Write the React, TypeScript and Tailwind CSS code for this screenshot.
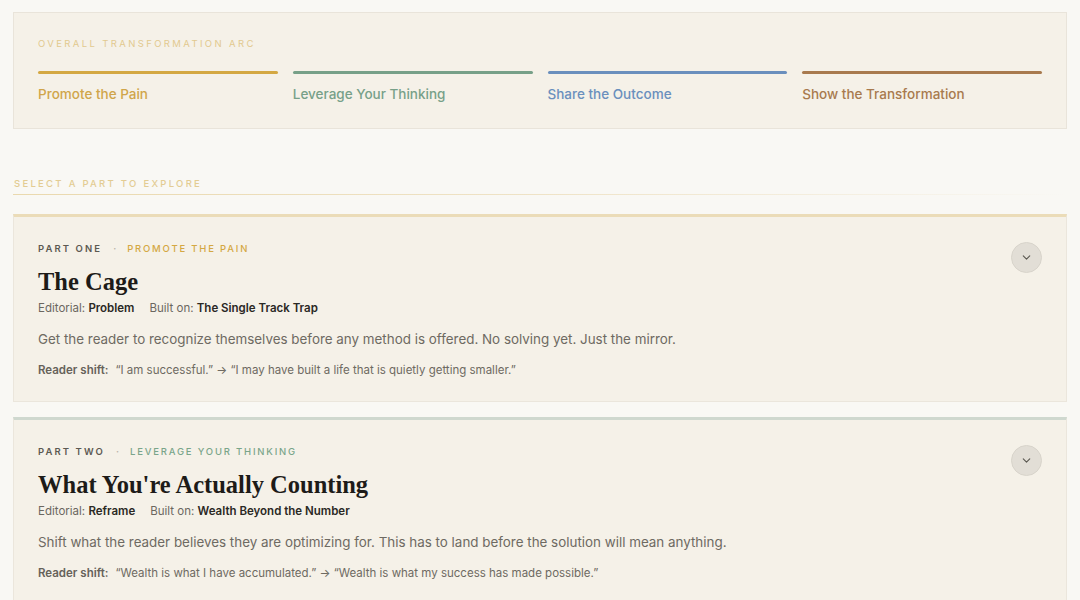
import React from "react";

const sans = { fontFamily: "Inter, 'Noto Sans', sans-serif" };

const arc = [
  { label: "Promote the Pain", line: "bg-[#d4a843]", text: "text-[#d0a54a]" },
  { label: "Leverage Your Thinking", line: "bg-[#77a088]", text: "text-[#77a088]" },
  { label: "Share the Outcome", line: "bg-[#6a8fbd]", text: "text-[#6a8fbd]" },
  { label: "Show the Transformation", line: "bg-[#a87a4e]", text: "text-[#a87a4e]" },
];

const parts = [
  {
    part: "PART ONE",
    stage: "PROMOTE THE PAIN",
    stageColor: "text-[#d4a843]",
    topBorder: "border-t-[#ebdcb8]",
    title: "The Cage",
    editorial: "Problem",
    built: "The Single Track Trap",
    desc: "Get the reader to recognize themselves before any method is offered. No solving yet. Just the mirror.",
    from: "\u201CI am successful.\u201D",
    to: "\u201CI may have built a life that is quietly getting smaller.\u201D",
  },
  {
    part: "PART TWO",
    stage: "LEVERAGE YOUR THINKING",
    stageColor: "text-[#7aa58a]",
    topBorder: "border-t-[#cfd8cf]",
    title: "What You're Actually Counting",
    editorial: "Reframe",
    built: "Wealth Beyond the Number",
    desc: "Shift what the reader believes they are optimizing for. This has to land before the solution will mean anything.",
    from: "\u201CWealth is what I have accumulated.\u201D",
    to: "\u201CWealth is what my success has made possible.\u201D",
  },
];

export default function App() {
  return (
    <div className="min-h-screen bg-[#f9f8f4] px-[13px] pt-[12px] pb-8" style={sans}>
      <div className="border border-[#e9e4da] bg-[#f5f1e8] px-6 pt-[25px] pb-[25px]">
        <div className="text-[9.5px] tracking-[0.25em] text-[#e2c98f] leading-[12px]">
          OVERALL TRANSFORMATION ARC
        </div>
        <div className="mt-[21px] grid grid-cols-4 gap-[15px]">
          {arc.map((a) => (
            <div key={a.label}>
              <div className={`h-[3px] rounded-full ${a.line}`} />
              <div className={`mt-[11px] text-[13.5px] font-medium leading-[18px] ${a.text}`}>{a.label}</div>
            </div>
          ))}
        </div>
      </div>

      <div className="mt-[49px] text-[9.5px] font-medium tracking-[0.24em] text-[#e3cc93] leading-[12px] pl-px">
        SELECT A PART TO EXPLORE
      </div>
      <div className="mt-[4px] h-px bg-gradient-to-r from-[#ead9ae] via-[#efe3c6] to-transparent" />

      <div className="mt-[19px] flex flex-col gap-[15px]">
        {parts.map((p) => (
          <div
            key={p.part}
            className={`relative border border-[#ebe6dc] border-t-[3px] ${p.topBorder} bg-[#f5f1e8] px-6 pt-[26px] pb-[23px]`}
          >
            <div className="flex items-center text-[9.5px] font-semibold leading-[12px]">
              <span className="tracking-[0.22em] text-[#5c5952]">{p.part}</span>
              <span className="mx-[11px] text-[#b9b4a8]">·</span>
              <span className={`font-medium tracking-[0.19em] ${p.stageColor}`}>{p.stage}</span>
            </div>
            <div
              className="mt-[12px] text-[24.5px] font-bold leading-[30px] text-[#1d1b18]"
              style={{ fontFamily: "'Liberation Serif', 'DejaVu Serif', serif" }}
            >
              {p.title}
            </div>
            <div className="mt-[3px] text-[11.5px] leading-[16px] text-[#6b675f]">
              Editorial: <span className="font-semibold text-[#2a2824]">{p.editorial}</span>
              <span className="ml-[15px]">Built on: </span>
              <span className="font-semibold text-[#2a2824]">{p.built}</span>
            </div>
            <div className="mt-[13px] text-[13.4px] leading-[20px] text-[#6e6a62]">{p.desc}</div>
            <div className="mt-[13px] text-[11.5px] leading-[16px] text-[#6e6a62]">
              <span className="font-semibold text-[#66625a]">Reader shift:</span>
              <span className="ml-[7px]">{p.from}</span> → {p.to}
            </div>
            <button className="absolute right-[24px] top-[25px] flex h-[31px] w-[31px] items-center justify-center rounded-full border border-[#d8d4cb] bg-[#e2ded6]">
              <svg width="13" height="13" viewBox="0 0 24 24" fill="none" stroke="#5a5750" strokeWidth="2" strokeLinecap="round" strokeLinejoin="round">
                <path d="M6 9l6 6 6-6" />
              </svg>
            </button>
          </div>
        ))}
      </div>
    </div>
  );
}
